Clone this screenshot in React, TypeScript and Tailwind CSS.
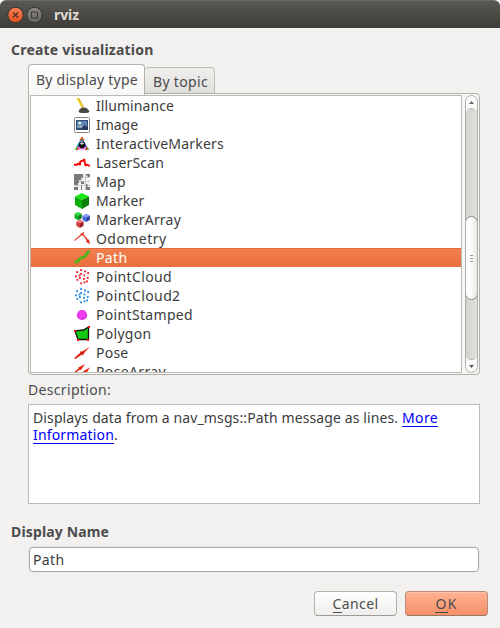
import { useLayoutEffect, useRef, useState } from "react";
import type { ReactNode } from "react";

/* Spreads a line of text to a given width by adjusting its tracking. */
function Fit({ text, width, children }: { text: string; width: number; children?: ReactNode }) {
  const ref = useRef<HTMLSpanElement>(null);
  const [spacing, setSpacing] = useState(0);
  useLayoutEffect(() => {
    if (ref.current) {
      const natural = ref.current.getBoundingClientRect().width;
      setSpacing((width - natural) / text.length);
    }
  }, [text, width]);
  return (
    <span ref={ref} className="inline-block whitespace-pre" style={{ letterSpacing: spacing }}>
      {children ?? text}
    </span>
  );
}

function Icon({ children }: { children: ReactNode }) {
  return (
    <svg width="16" height="16" viewBox="0 0 16 16" className="block shrink-0">
      {children}
    </svg>
  );
}

const Cube = ({ x, y, s, c }: { x: number; y: number; s: number; c: [string, string, string] }) => (
  <g transform={`translate(${x} ${y}) scale(${s})`}>
    <path d="M8 0 15 3.5 8 7 1 3.5Z" fill={c[0]} />
    <path d="M1 3.5 8 7V16L1 12Z" fill={c[1]} />
    <path d="M15 3.5 8 7V16L15 12Z" fill={c[2]} />
  </g>
);

const dots = [
  [6.2, 0.2], [2.2, 2.2], [10.2, 1.5], [6.2, 4], [13.2, 3.2], [1, 6.5], [9.5, 5.5],
  [5, 8], [12.8, 8], [9, 9], [2.5, 10], [12.2, 11.5], [6.2, 13.4], [9.6, 12.4], [4.6, 5.6],
];
const Cloud = ({ color }: { color: string }) => (
  <Icon>
    {dots.map(([x, y]) => (
      <rect key={`${x}-${y}`} x={x} y={y} width="1.8" height="1.8" fill={color} />
    ))}
  </Icon>
);

const icons = {
  illuminance: (
    <Icon>
      <path d="M2.2 0 4.8 0 9.8 9.2 7.8 10.2Z" fill="#f2d22e" />
      <path d="M4.6 0 9.8 9.2" stroke="#b59a28" strokeWidth=".7" />
      <path d="M4.5 14C5 11 7 9.5 9.8 9.5S14.5 11 15.5 14L13 15H7Z" fill="#484845" />
    </Icon>
  ),
  image: (
    <Icon>
      <rect x=".5" y=".5" width="15" height="15" rx="1" fill="#fff" stroke="#858585" />
      <rect x="2" y="3" width="12" height="10" fill="#2d4c7c" />
      <path d="M3 4H13V9.5L3 10.5Z" fill="#5e86b5" />
      <path d="M3 9.5 8 8.5 13 9.5V11L3 10.5Z" fill="#a9bccb" />
      <path d="M8 10 11 8 14 11V13H9Z" fill="#283a55" />
      <circle cx="5.8" cy="6" r="1.6" fill="#e3ecd4" />
    </Icon>
  ),
  interactive: (
    <Icon>
      <path d="M8 3 3 12.5" fill="none" stroke="#3556ee" strokeWidth="1.5" />
      <path d="M8 3 13 12.5" fill="none" stroke="#2c37f0" strokeWidth="1.5" />
      <path d="M6.2 4.8 2.8 10.6" stroke="#35c4dd" strokeWidth="1.1" />
      <path d="M2.5 12.6H13.5" stroke="#f05ad8" strokeWidth="1.6" />
      <path d="M8 .3 5.4 4.6H10.6ZM1 13.8 3.2 10 4.8 14.2ZM15 13.8 12.8 10 11.2 14.2Z" fill="#ee2a20" />
      <path d="M8 1.8 7 4.6H9.6ZM.8 13.6 2.9 10.4 3 14ZM15.2 13.6 13.1 10.4 13 14Z" fill="#2dd23f" />
      <circle cx="8" cy="9" r="3.3" fill="#0c0c0c" />
      <path d="M5.6 7.3 8 6.3 10.4 7.3 8 8.9Z" fill="#c9d3c9" />
    </Icon>
  ),
  laser: (
    <Icon>
      <path d="M.9 9.8H2.8L4.5 8.6 6 9.6 6.3 6.6 9 5.4 10.4 4.6 10.8 8 11.6 10.4 13 9.6 15 10.6" fill="none" stroke="#f00" strokeWidth="1.9" strokeLinejoin="round" strokeLinecap="square" />
    </Icon>
  ),
  map: (
    <Icon>
      <path d="M0 0H16V16H0Z" fill="#f2f2f2" />
      <path d="M3.5 0V16M7.5 0V16M11.5 0V16M0 3.5H16M0 7.5H16M0 11.5H16" stroke="#c4c4c4" strokeWidth=".8" />
      <path d="M0 0H9V3.5H7V6H5V9H4V11H0ZM12 0H16V3H13.5V1.5H12ZM7 7.5H10V10H7ZM7 12H8V16H7ZM12 10H13.5V13H16V16H12ZM0 13H4V16H0Z" fill="#797979" />
    </Icon>
  ),
  marker: <Icon><Cube x={0} y={0} s={1} c={["#18e818", "#0fae0f", "#0a820a"]} /></Icon>,
  markerArray: (
    <Icon>
      <Cube x={0} y={0} s={0.52} c={["#27df38", "#10b422", "#087d17"]} />
      <Cube x={8} y={1.8} s={0.52} c={["#849eff", "#466ae2", "#25419d"]} />
      <Cube x={1.8} y={7.6} s={0.52} c={["#ee7777", "#d33b3b", "#9c2222"]} />
    </Icon>
  ),
  odometry: (
    <Icon>
      <path d="M0 9.2 6.8 3.6 6.2 3 10.4.8 8.4 4.8 7.8 4.2.6 10Z" fill="#e02c16" />
      <path d="M8.9 2.2 14 8.8 14.8 8.2 16 13.2 11.8 10.4 12.7 9.7 8.1 2.7Z" fill="#e02c16" />
    </Icon>
  ),
  path: (
    <Icon>
      <path d="M1.7 12C3.7 12 4.5 11 5.4 9.3C6.4 7.4 8 8 10 7.2C12.4 6.2 11.5 3 14.8 2" fill="none" stroke="#51b41c" strokeWidth="2.9" strokeLinecap="round" />
    </Icon>
  ),
  cloud: <Cloud color="#f01018" />,
  cloud2: <Cloud color="#1683ec" />,
  point: (
    <Icon>
      <circle cx="8" cy="8" r="5.1" fill="#dc2be0" />
      <circle cx="7.6" cy="7.5" r="4" fill="#f03df0" />
    </Icon>
  ),
  polygon: (
    <Icon>
      <path d="M1 4.8 9.5 4 14.5 1 14.5 13.5 4 13.5Z" fill="#13c713" stroke="#111" strokeWidth="1.3" />
      <path d="M0 4H2V6H0ZM14 0H16V2H14ZM3 13H5V15H3ZM13 13H15V15H13Z" fill="#f01010" />
    </Icon>
  ),
  pose: (
    <Icon>
      <path d="M.3 13 6.6 7.6 5.8 6.8 9.4 6 16 1.5 10.2 8 8.8 10.4 8 9.4 1.2 14.3Z" fill="#ed1c0b" />
      <path d="m6.4 7.2 2.4 2.5" stroke="#983020" />
    </Icon>
  ),
  poseArray: (
    <Icon>
      <path d="M0 8.4 4.6 4.4 4 3.7 11 0 6.8 6.2 6 5.5.8 9.4ZM5 12.4 9.6 8.2 9 7.5 16 3.3 11.8 10 11 9.3 5.8 13.4Z" fill="#ed1c0b" />
    </Icon>
  ),
};

const rows: { name: string; width: number; icon: ReactNode }[] = [
  { name: "Illuminance", width: 78, icon: icons.illuminance },
  { name: "Image", width: 42, icon: icons.image },
  { name: "InteractiveMarkers", width: 128, icon: icons.interactive },
  { name: "LaserScan", width: 68, icon: icons.laser },
  { name: "Map", width: 30, icon: icons.map },
  { name: "Marker", width: 48.5, icon: icons.marker },
  { name: "MarkerArray", width: 85, icon: icons.markerArray },
  { name: "Odometry", width: 70.5, icon: icons.odometry },
  { name: "Path", width: 31.5, icon: icons.path },
  { name: "PointCloud", width: 76, icon: icons.cloud },
  { name: "PointCloud2", width: 84.5, icon: icons.cloud2 },
  { name: "PointStamped", width: 97, icon: icons.point },
  { name: "Polygon", width: 55.5, icon: icons.polygon },
  { name: "Pose", width: 32.5, icon: icons.pose },
  { name: "PoseArray", width: 70, icon: icons.poseArray },
];

function ScrollBar() {
  return (
    <div className="flex h-[278px] w-[13px] shrink-0 flex-col overflow-hidden rounded-[6.5px] border border-[#b1aea9] bg-[#fafafa]">
      <div className="flex h-[12px] shrink-0 items-center justify-center">
        <svg width="5" height="3" className="block"><path d="M0 3 2.5 0 5 3Z" fill="#666" /></svg>
      </div>
      <div className="flex h-[252px] shrink-0 flex-col rounded-[6px] border-y border-[#b8b5b0] bg-linear-to-r from-[#d4d3d0] to-[#e1e0dd]">
        <div className="-mx-px mt-[107px] flex h-[84px] shrink-0 flex-col items-center justify-center gap-[2px] rounded-[6.5px] border border-[#8e8b87] bg-linear-to-r from-white via-[#fafafa] to-[#e7e6e3]">
          <div className="h-px w-[3px] bg-[#999]" />
          <div className="h-px w-[3px] bg-[#999]" />
          <div className="h-px w-[3px] bg-[#999]" />
        </div>
      </div>
      <div className="flex h-[12px] shrink-0 items-center justify-center">
        <svg width="5" height="3" className="block"><path d="M0 0H5L2.5 3Z" fill="#555" /></svg>
      </div>
    </div>
  );
}

export default function App() {
  return (
    <div className="h-[628px] w-[500px] overflow-hidden bg-white font-['Noto_Sans',sans-serif] text-[14px] leading-[19px] text-[#3c3c3c]">
      <div className="flex h-full flex-col rounded-t-[6px] bg-[#f2f1f0]">
        <header className="flex h-7 shrink-0 items-center rounded-t-[6px] border-t border-[#6b6963] bg-linear-to-b from-[#595852] to-[#3d3c38] pl-[7px]">
          <svg width="36" height="18" viewBox="0 0 36 18" className="block">
            <defs>
              <linearGradient id="closeFill" x1="0" y1="0" x2="0" y2="1">
                <stop stopColor="#f58058" /><stop offset="1" stopColor="#e4511f" />
              </linearGradient>
              <linearGradient id="maxFill" x1="0" y1="0" x2="0" y2="1">
                <stop stopColor="#8b8982" /><stop offset="1" stopColor="#65645e" />
              </linearGradient>
            </defs>
            <circle cx="8.5" cy="9" r="7.7" fill="url(#closeFill)" stroke="#34332e" />
            <path d="m6 6.5 5 5m0-5-5 5" stroke="#52301f" strokeWidth="1.3" />
            <circle cx="27.5" cy="9" r="7.7" fill="url(#maxFill)" stroke="#34332e" />
            <rect x="24.5" y="6" width="6" height="6" fill="none" stroke="#3c3b37" />
          </svg>
          <h1 className="ml-[11px] font-bold text-[#dfdbd2]"><Fit text="rviz" width={25} /></h1>
        </header>

        <h2 className="ml-[11px] mt-[12px] h-[19px] shrink-0 font-bold text-[#4c4c4c]"><Fit text="Create visualization" width={142.5} /></h2>

        <div className="ml-[28px] mt-[5px] flex h-[30px] shrink-0 items-end">
          <div className="z-10 -mb-px flex h-[31px] w-[117px] shrink-0 pl-[7px] rounded-t-[4px] border border-b-0 border-[#b3b0aa] bg-linear-to-b from-white to-[#f7f7f6] pt-[5px] text-[#4c4c4c]">
            <Fit text="By display type" width={102} />
          </div>
          <div className="flex h-[27px] w-[70px] shrink-0 rounded-t-[4px] border border-b-0 border-l-0 border-[#bebbb6] bg-linear-to-b from-[#f0efee] to-[#dfdedc] pl-[8px] pt-[4px] text-[#4c4c4c]">
            <Fit text="By topic" width={55} />
          </div>
        </div>

        <div className="-mt-px ml-[28px] flex h-[282px] w-[452px] shrink-0 justify-between rounded-[4px] rounded-tl-none border border-[#b3b0aa] bg-[#f7f7f6] px-px pt-px">
          <div className="h-[278px] w-[432px] overflow-hidden border border-[#bdbab6] bg-white">
            {rows.map((row) => (
              <div
                key={row.name}
                className={
                  row.name === "Path"
                    ? "flex h-[19px] items-center bg-linear-to-b from-[#f37f4e] to-[#ea6f3e] pl-[43px] text-white shadow-[inset_0_1px_0_#dd6c3c]"
                    : "flex h-[19px] items-center pl-[43px]"
                }
              >
                {row.icon}
                <div className="ml-[6px] h-[19px]"><Fit text={row.name} width={row.width} /></div>
              </div>
            ))}
          </div>
          <ScrollBar />
        </div>

        <div className="ml-[28px] mt-[5px] h-[19px] shrink-0 text-[#4c4c4c]"><Fit text="Description:" width={83} /></div>

        <div className="ml-[28px] mt-[5px] h-[100px] w-[452px] shrink-0 border border-[#bdbab5] bg-white pl-[4px] pt-[5px] leading-[16px]">
          <div className="flex h-[17px]">
            <Fit text="Displays data from a nav_msgs::Path message as lines. " width={369} />
            <a className="h-[17px] border-b border-[#0000ff] text-[#0000ff]"><Fit text="More" width={36} /></a>
          </div>
          <div className="flex h-[17px]">
            <a className="h-[17px] border-b border-[#0000ff] text-[#0000ff]"><Fit text="Information" width={81} /></a>
            <span>.</span>
          </div>
        </div>

        <h2 className="ml-[11px] mt-[18px] h-[19px] shrink-0 font-bold text-[#4c4c4c]"><Fit text="Display Name" width={98} /></h2>

        <div className="ml-[29px] mt-[6px] flex h-[25px] w-[450px] shrink-0 items-center rounded-[4px] border border-[#aaa7a2] bg-white pl-[3px] shadow-[0_0_0_1px_#eae8e6]">
          <Fit text="Path" width={31.5} />
        </div>

        <div className="ml-[314px] mt-[19px] flex shrink-0 gap-2 text-[#4c4c4c]">
          <button className="flex h-[25px] w-[83px] items-center justify-center rounded-[4px] border border-[#b4b1ac] border-b-[#9c9994] bg-linear-to-b from-white to-[#efeeed]">
            <Fit text="Cancel" width={46}><span className="inline-block h-[19px] border-b border-[#4c4c4c]">C</span>ancel</Fit>
          </button>
          <button className="flex h-[25px] w-[83px] items-center justify-center rounded-[4px] border border-[#b98b78] border-b-[#9c7666] bg-linear-to-b from-[#ffb294] to-[#f58f67] shadow-[inset_0_1px_0_#ffc5ad]">
            <Fit text="OK" width={22}><span className="inline-block h-[19px] border-b border-[#4c4c4c]">O</span>K</Fit>
          </button>
        </div>
      </div>
    </div>
  );
}
